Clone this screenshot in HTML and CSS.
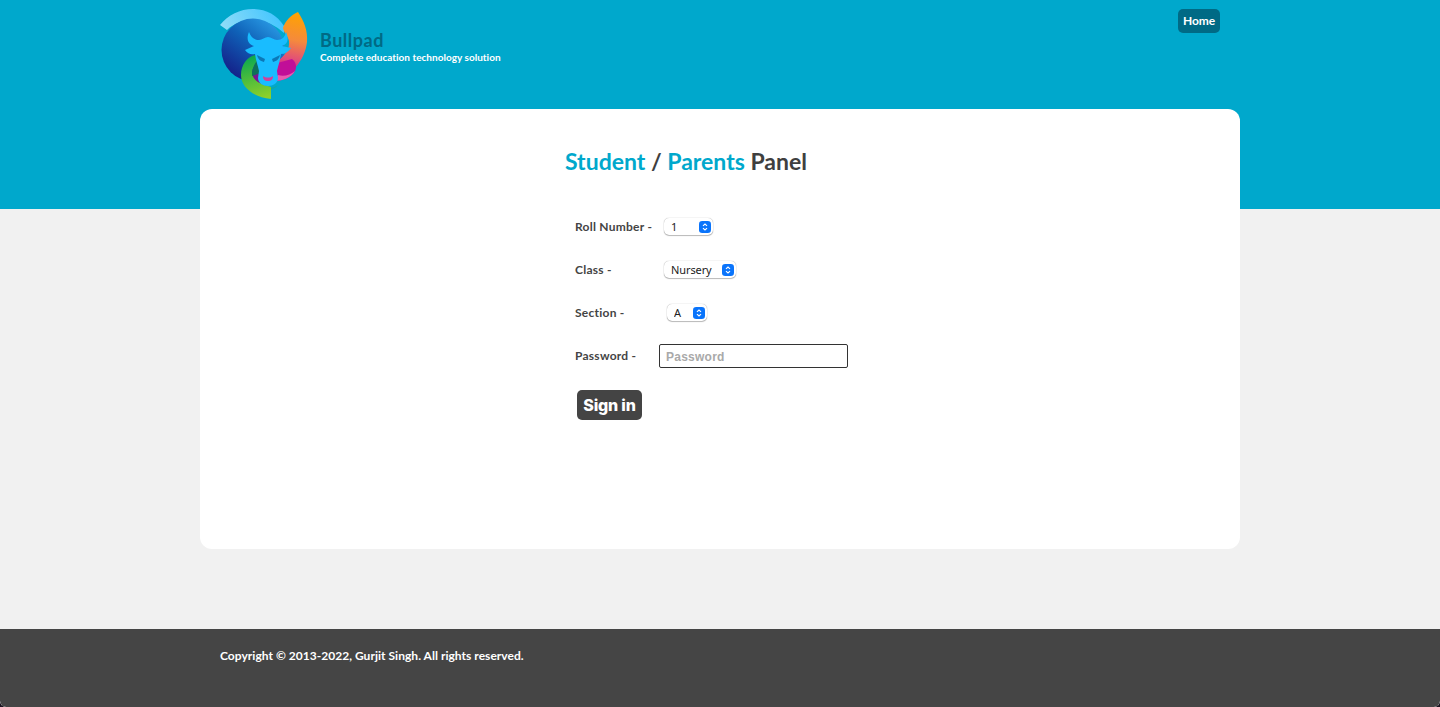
FILE: index.html
```html
<!DOCTYPE html>
<html lang="en">
<head>
<meta charset="utf-8">
<title>Bullpad</title>
<link rel="stylesheet" href="styles.css">
</head>
<body>
<header class="top">
  <div class="top-inner">
    <a class="brand" href="#">
      <svg class="logo" width="88" height="91" viewBox="0 0 88 91" aria-label="Bullpad logo">
        <defs>
          <linearGradient id="ball" x1="0.85" y1="0.05" x2="0.2" y2="0.9">
            <stop offset="0" stop-color="#2a9ce6"/>
            <stop offset="0.45" stop-color="#0f62b8"/>
            <stop offset="1" stop-color="#14228a"/>
          </linearGradient>
          <linearGradient id="arc" x1="0" y1="0.6" x2="1" y2="0.4">
            <stop offset="0" stop-color="#8fdcf8"/>
            <stop offset="1" stop-color="#3fc4ff"/>
          </linearGradient>
          <linearGradient id="fire" x1="0.5" y1="0" x2="0.4" y2="1">
            <stop offset="0" stop-color="#ffa300"/>
            <stop offset="0.45" stop-color="#f58a3c"/>
            <stop offset="0.8" stop-color="#e0487e"/>
            <stop offset="1" stop-color="#c4109a"/>
          </linearGradient>
          <linearGradient id="leaf" x1="0.4" y1="0" x2="0.6" y2="1">
            <stop offset="0" stop-color="#0aa84f"/>
            <stop offset="1" stop-color="#8ed02a"/>
          </linearGradient>
        </defs>
        <path d="M0 16C8 6 20 0 33 0C46 0 57 6 64 17L64 24C56 17 46 11 33 11C22 11 13 15 7 21Z" fill="url(#arc)"/>
        <circle cx="33" cy="41" r="31.500" fill="url(#ball)"/>
        <path d="M78 3C84 12 88 22 87 33C86 42 82 51 75 59L64 64L58 52C65 46 70 40 69 32C68 27 64 24 63 19C65 12 71 6 78 3Z" fill="url(#fire)"/>
        <path d="M72 50C76 53 77 58 75 62C71 69 62 72 53 72L46 66L50 56Z" fill="#c10f98"/>
        <path d="M58 66C64 68 70 66 75 62C71 69 62 72 54 72Z" fill="#e85bb0"/>
        <path d="M25 68L40 55L55 66L50 75C42 78 32 74 25 68Z" fill="#7a1590"/>
        <path d="M44 78C48 80 54 79 58 76C55 80 50 82 46 81Z" fill="#12a8a0"/>
        <path d="M35 46C27 48 21 56 21 66C21 78 33 88 51 90L51 78C42 76 32 72 32 63C33 58 36 54 39 50Z" fill="url(#leaf)"/>
        <path d="M32 63C33 57 36 53 38 50L41 64L32 67Z" fill="#0f6f5a"/>
        <path d="M29 23C26 30 28 35 34 37L25 41C28 45 31 46 35 45C36 52 38 57 39 62L38 69C38 74 43 77 48 77C53 77 58 74 58 69L57 62C58 57 60 52 61 45C65 45 68 43 71 39L62 37C68 35 69 30 66 23C65 28 62 31 57 31C54 31 51 28 48 28C45 28 42 31 39 31C34 31 31 28 29 23Z" fill="#19bcff"/>
        <path d="M37 46L45 50L44 53C40 52 38 50 37 46ZM60 46L52 50L53 53C57 52 59 50 60 46Z" fill="#0b78b8"/>
        <path d="M43 67C46 69 50 69 53 67C53 71 51 72 48 72C45 72 43 71 43 67Z" fill="#d0409c"/>
      </svg>
      <span class="brand-text">
        <span class="brand-name">Bullpad</span>
        <span class="brand-tag">Complete education technology solution</span>
      </span>
    </a>
    <nav class="nav"><a class="nav-link" href="#">Home</a></nav>
  </div>
</header>

<main class="card">
  <h1 class="title"><span class="accent">Student</span> / <span class="accent">Parents</span> Panel</h1>
  <form class="form">
    <div class="row">
      <label class="label" for="roll">Roll Number -</label>
      <span class="select-wrap select-roll">
        <select class="select" id="roll"><option>1</option></select>
        <svg class="chev" width="12" height="12" viewBox="0 0 13 13"><rect width="13" height="13" rx="3.500" fill="#0a74fb"/><path d="M4.300 5.300L6.500 3.300L8.700 5.300M4.300 7.700L6.500 9.700L8.700 7.700" fill="none" stroke="#fff" stroke-width="1.200"/></svg>
      </span>
    </div>
    <div class="row">
      <label class="label" for="class">Class -</label>
      <span class="select-wrap select-class">
        <select class="select" id="class"><option>Nursery</option></select>
        <svg class="chev" width="12" height="12" viewBox="0 0 13 13"><rect width="13" height="13" rx="3.500" fill="#0a74fb"/><path d="M4.300 5.300L6.500 3.300L8.700 5.300M4.300 7.700L6.500 9.700L8.700 7.700" fill="none" stroke="#fff" stroke-width="1.200"/></svg>
      </span>
    </div>
    <div class="row">
      <label class="label" for="section">Section -</label>
      <span class="select-wrap select-section">
        <select class="select" id="section"><option>A</option></select>
        <svg class="chev" width="12" height="12" viewBox="0 0 13 13"><rect width="13" height="13" rx="3.500" fill="#0a74fb"/><path d="M4.300 5.300L6.500 3.300L8.700 5.300M4.300 7.700L6.500 9.700L8.700 7.700" fill="none" stroke="#fff" stroke-width="1.200"/></svg>
      </span>
    </div>
    <div class="row">
      <label class="label" for="password">Password -</label>
      <input class="input" id="password" type="password" placeholder="Password">
    </div>
    <button class="submit" type="button">Sign in</button>
  </form>
</main>

<footer class="foot">
  <p class="copy">Copyright © 2013-2022, Gurjit Singh. All rights reserved.</p>
</footer>
</body>
</html>
```

FILE: styles.css
```css
* { box-sizing: border-box; }
html { background: #1a1420; }
body {
  margin: 0;
  height: 707px;
  overflow: hidden;
  background: #f1f1f1;
  font-family: "Lato", "Open Sans", sans-serif;
  border-radius: 0 0 6px 6px;
}
.top {
  height: 209px;
  background: #00a8cc;
}
.top-inner {
  width: 1000px;
  margin: 0 auto;
  display: flex;
  justify-content: space-between;
  align-items: flex-start;
  padding-top: 9px;
}
.brand {
  display: flex;
  align-items: flex-start;
  gap: 12px;
  text-decoration: none;
}
.logo { display: block; }
.brand-text {
  display: flex;
  flex-direction: column;
  padding-top: 21px;
}
.brand-name {
  font-size: 18px;
  line-height: 21px;
  font-weight: 700;
  color: #006a85;
  letter-spacing: 0.5px;
}
.brand-tag {
  font-size: 10px;
  line-height: 12px;
  font-weight: 700;
  color: #fff;
  letter-spacing: 0.02px;
}
.nav-link {
  display: block;
  height: 24px;
  padding: 0 4px 0 5px;
  width: 42px;
  border-radius: 5px;
  background: #006a85;
  color: #fff;
  font-size: 12px;
  line-height: 23px;
  font-weight: 700;
  letter-spacing: -0.1px;
  text-decoration: none;
  white-space: nowrap;
}
.card {
  width: 1040px;
  height: 440px;
  margin: -100px auto 80px;
  padding: 39px 0 0 365px;
  background: #fff;
  border-radius: 12px;
}
.title {
  margin: 0;
  font-size: 23px;
  line-height: 27px;
  font-weight: 700;
  color: #3f3f3f;
}
.accent { color: #00a8cc; }
.form {
  margin-top: 30px;
  padding-left: 10px;
}
.row {
  display: flex;
  align-items: center;
  height: 43px;
}
.label {
  width: 84px;
  font-size: 12px;
  font-weight: 700;
  color: #444;
  letter-spacing: 0.25px;
  white-space: nowrap;
}
.select-wrap {
  position: relative;
  display: block;
  height: 17px;
}
.select-roll { width: 49px; margin-left: 5px; }
.select-class { width: 72px; margin-left: 5px; }
.select-section { width: 40px; margin-left: 8px; }
.select {
  appearance: none;
  display: block;
  width: 100%;
  height: 17px;
  padding: 0 0 0 7px;
  border: 0;
  border-radius: 5px;
  background: #fff;
  box-shadow: 0 0 1px rgba(0, 0, 0, 0.4), 0 1px 1px rgba(0, 0, 0, 0.25);
  font-family: "Noto Sans", sans-serif;
  font-size: 11px;
  letter-spacing: -0.1px;
  color: #222;
}
.chev {
  position: absolute;
  top: 3px;
  right: 2px;
  pointer-events: none;
}
.input {
  display: block;
  width: 189px;
  height: 24px;
  padding: 2px 6px 0;
  border: 1px solid #333;
  border-radius: 2px;
  background: #fff;
  font-family: "Liberation Sans", sans-serif;
  font-size: 12px;
  font-weight: 700;
}
.input::placeholder { color: #a9a9a9; opacity: 1; letter-spacing: 0.25px; }
.submit {
  display: block;
  width: 65px;
  height: 30px;
  margin: 13px 0 0 2px;
  padding: 0;
  border: 0;
  border-radius: 5px;
  background: #444;
  color: #fff;
  font-family: "Inter", "Liberation Sans", sans-serif;
  font-size: 16px;
  font-weight: 800;
  letter-spacing: -0.2px;
}
.foot {
  height: 78px;
  background: #454545;
  padding: 19px 0 0 220px;
  border-radius: 0 0 6px 6px;
}
.copy {
  margin: 0;
  font-size: 12px;
  line-height: 16px;
  font-weight: 700;
  color: #fff;
  letter-spacing: 0.03px;
}
```
